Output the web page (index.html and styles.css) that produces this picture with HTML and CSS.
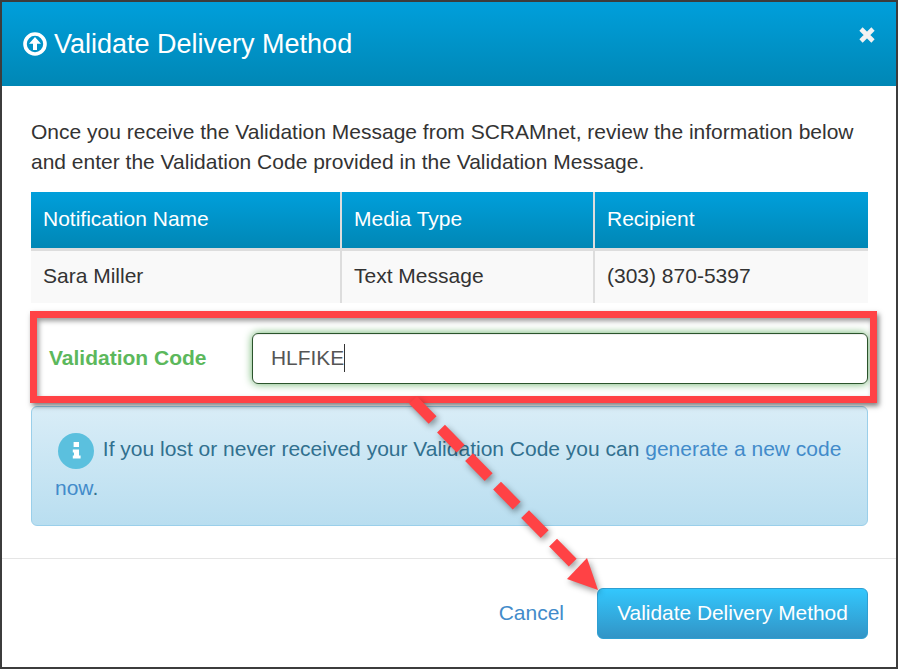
FILE: index.html
```html
<!DOCTYPE html>
<html lang="en">
<head>
    <meta charset="UTF-8">
    <meta name="viewport" content="width=device-width, initial-scale=1.0">
    <title>Validate Delivery Method</title>
    <link rel="stylesheet" href="styles.css">
</head>
<body>
    <div class="modal">
        <div class="modal-header">
            <h4 class="modal-title">
                <svg class="title-icon" viewBox="0 0 24 24">
                    <circle cx="12" cy="12" r="10" fill="none" stroke="#fff" stroke-width="3.6"/>
                    <path d="M12 5 L18 11.8 H14 V18 H10 V11.8 H6 Z" fill="#fff"/>
                </svg>
                Validate Delivery Method
            </h4>
            <svg class="close-icon" viewBox="0 0 18 18">
                <path d="M3 3 L15 15 M15 3 L3 15" stroke="#f2f2f2" stroke-width="4.6" fill="none"/>
            </svg>
        </div>

        <div class="modal-body">
            <p class="intro">Once you receive the Validation Message from SCRAMnet, review the information below and enter the Validation Code provided in the Validation Message.</p>

            <table class="details">
                <thead>
                    <tr>
                        <th class="col-name">Notification Name</th>
                        <th class="col-type">Media Type</th>
                        <th>Recipient</th>
                    </tr>
                </thead>
                <tbody>
                    <tr>
                        <td>Sara Miller</td>
                        <td>Text Message</td>
                        <td>(303) 870-5397</td>
                    </tr>
                </tbody>
            </table>

            <div class="form-row">
                <label class="code-label">Validation Code</label>
                <div class="code-input"><span class="code-value">HLFIKE</span></div>
            </div>

            <div class="alert">
                <span class="info-icon">
                    <svg viewBox="0 0 36 36">
                        <rect x="15.6" y="9" width="5.4" height="5" fill="#fff"/>
                        <path d="M14.8 16.4 H21 V22.4 H22.6 V25.6 H14.8 V22.4 H16 V19.4 H14.8 Z" fill="#fff"/>
                    </svg>
                </span>
                If you lost or never received your Validation Code you can <a href="#">generate a new code now</a>.
            </div>
        </div>

        <div class="modal-footer">
            <a class="cancel" href="#">Cancel</a>
            <button class="validate-button">Validate Delivery Method</button>
        </div>

        <!-- annotation drawn over the screenshot -->
        <div class="callout-box"></div>
        <svg class="callout-arrow" viewBox="0 0 898 669">
            <path d="M413 400 L574 564" stroke="#ff4245" stroke-width="11" stroke-dasharray="28 12" fill="none"/>
            <path d="M598 590 L587 558 L567 579 Z" fill="#ff4245"/>
        </svg>
    </div>
</body>
</html>
```

FILE: styles.css
```css
* {
    box-sizing: border-box;
}
body {
    margin: 0;
    font-family: "Liberation Sans", Arial, sans-serif;
    font-size: 21px;
    line-height: 30px;
    color: #333;
    background: #fff;
}
a {
    color: #428bca;
    text-decoration: none;
}
.modal {
    position: relative;
    width: 898px;
    height: 669px;
    border: 2px solid #3c3c3c;
    overflow: hidden;
}
.modal-header {
    display: flex;
    justify-content: space-between;
    height: 84px;
    padding: 0 21px;
    color: #fff;
    background: linear-gradient(to bottom, #009fdb, #0087b5);
}
.modal-title {
    display: flex;
    align-items: center;
    gap: 7px;
    margin: 0 0 1px;
    font-size: 27px;
    font-weight: normal;
}
.title-icon {
    width: 24px;
    height: 24px;
}
.close-icon {
    width: 18px;
    height: 18px;
    margin: 24px -1px 0 0;
}
.modal-body {
    padding: 31px 28px 32px 29px;
    border-bottom: 1px solid #e5e5e5;
}
.intro {
    margin: 0 0 15px;
}
.details {
    width: 100%;
    border-collapse: collapse;
    table-layout: fixed;
}
.details th {
    height: 57px;
    padding: 0 12px 2px;
    font-weight: normal;
    text-align: left;
    color: #fff;
    background: linear-gradient(to bottom, #009fdb, #0087b5);
    border-bottom: 3px solid #ddd;
    background-clip: padding-box;
}
.details td {
    height: 54px;
    padding: 0 12px 2px;
    background: #f9f9f9;
}
.details th + th,
.details td + td {
    border-left: 2px solid #ddd;
}
.col-name {
    width: 310px;
}
.col-type {
    width: 253px;
}
.form-row {
    display: flex;
    align-items: center;
    margin: 30px 0 22px;
}
.code-label {
    width: 221px;
    padding: 0 0 2px 18px;
    font-weight: bold;
    color: #5cb85c;
}
.code-input {
    flex: 1;
    height: 51px;
    padding: 9px 18px;
    font-size: 20.9px;
    color: #555;
    border: 1px solid #2b542c;
    border-radius: 6px;
    box-shadow: inset 0 1px 1px rgba(0, 0, 0, 0.075), 0 0 8px #67b168;
}
.code-value {
    display: inline-block;
    line-height: 28px;
    border-right: 1px solid #333;
}
.alert {
    height: 120px;
    padding: 23px 23px 0;
    line-height: 38px;
    color: #31708f;
    background: linear-gradient(to bottom, #d9edf7, #b9def0);
    border: 1px solid #9acfea;
    border-radius: 6px;
}
.info-icon {
    display: inline-block;
    width: 36px;
    height: 36px;
    margin: 0 3px 0 3px;
    vertical-align: -13px;
    background: #5bc0de;
    border-radius: 50%;
}
.info-icon svg {
    display: block;
}
.modal-footer {
    display: flex;
    justify-content: flex-end;
    align-items: center;
    gap: 33px;
    padding: 29px 28px 0 0;
}
.cancel {
    margin-bottom: 2px;
}
.validate-button {
    width: 271px;
    height: 51px;
    padding: 0 0 2px;
    font: inherit;
    font-size: 20.9px;
    color: #fff;
    background: linear-gradient(to bottom, #33c7fd, #3294c6);
    border: 1px solid #2e9fd2;
    border-radius: 6px;
    cursor: pointer;
}
.callout-box {
    position: absolute;
    left: 28px;
    top: 309px;
    width: 847px;
    height: 92px;
    border: 7px solid #ff4245;
    box-shadow: 2px 3px 5px rgba(0, 0, 0, 0.5), inset 2px 3px 5px rgba(0, 0, 0, 0.4);
}
.callout-arrow {
    position: absolute;
    left: -2px;
    top: -2px;
    width: 898px;
    height: 669px;
    filter: drop-shadow(2px 3px 3px rgba(0, 0, 0, 0.4));
}
```
